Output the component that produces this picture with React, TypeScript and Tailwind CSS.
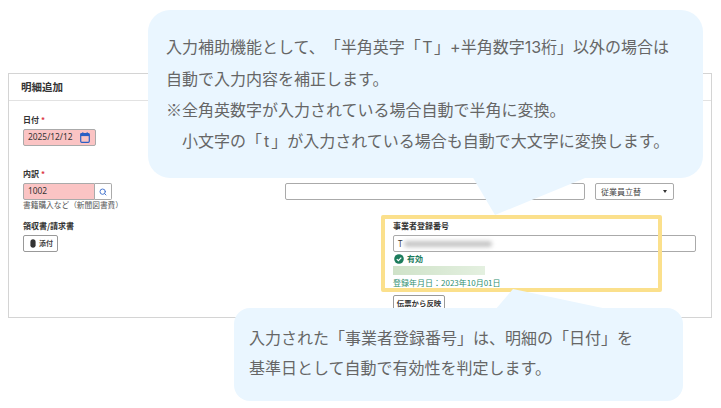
import { Search } from 'lucide-react';

const FONT = "font-['Noto_Sans_CJK_JP','Noto_Sans',sans-serif]";

function Label({ children, required }: { children: string; required?: boolean }) {
  return (
    <div className="h-[12px] text-[8px] leading-[12px] font-bold text-[#333]">
      {children}
      {required && <span className="ml-[2px] text-[#dc3545]">*</span>}
    </div>
  );
}

function CalendarIcon() {
  return (
    <svg width="10" height="11" viewBox="0 0 10 11" className="shrink-0">
      <rect x="0.7" y="1.5" width="8.6" height="8.8" rx="1" fill="none" stroke="#2b5fc4" strokeWidth="1.2" />
      <rect x="0.7" y="1.5" width="8.6" height="2.6" fill="#2b5fc4" />
      <rect x="2.2" y="0.3" width="1.2" height="1.6" fill="#2b5fc4" />
      <rect x="6.6" y="0.3" width="1.2" height="1.6" fill="#2b5fc4" />
    </svg>
  );
}

function ClipIcon() {
  return (
    <svg width="6" height="9" viewBox="0 0 6 9" className="shrink-0">
      <path d="M3 0.3C4.6 0.3 5.6 1.4 5.6 2.8V6.2C5.6 7.7 4.5 8.7 3 8.7C1.5 8.7 0.4 7.7 0.4 6.2V2.8C0.4 1.4 1.4 0.3 3 0.3Z" fill="#333" />
    </svg>
  );
}

function CheckIcon() {
  return (
    <svg width="10" height="10" viewBox="0 0 10 10" className="shrink-0">
      <circle cx="5" cy="5" r="4.8" fill="#1c7c5c" />
      <path d="M2.8 5.1L4.4 6.6L7.3 3.6" fill="none" stroke="#fff" strokeWidth="1.2" />
    </svg>
  );
}

function DetailForm() {
  return (
    <div className="h-[245px] w-[704px] border border-[#d4d4d4] bg-white">
      <div className="flex h-[27px] items-center border-b border-[#e2e2e2] pl-[12px] text-[10.5px] font-bold text-[#333]">
        明細追加
      </div>
      <div className="flex">
        <div className="w-[276px] pl-[14px] pt-[13px]">
          <Label required>日付</Label>
          <div className="mt-[3px] flex h-[17px] w-[73px] items-center justify-between rounded-[2px] border border-[#aaa] bg-[#fbc4c4] pl-[4px] pr-[5px] text-[8.4px] text-[#333]">
            <span className="font-['Noto_Sans',sans-serif]">2025/12/12</span>
            <CalendarIcon />
          </div>
          <div className="mt-[22px]">
            <Label required>内訳</Label>
          </div>
          <div className="mt-[3px] flex h-[17px] w-[89px]">
            <div className="flex w-[72px] items-center rounded-l-[2px] border border-[#aaa] bg-[#fbc4c4] pl-[4px] text-[8.4px] text-[#333]">
              <span className="font-['Noto_Sans',sans-serif]">1002</span>
            </div>
            <div className="flex w-[17px] items-center justify-center rounded-r-[2px] border border-l-0 border-[#aaa] bg-white">
              <Search size={8} strokeWidth={3} className="text-[#4a78d0]" />
            </div>
          </div>
          <div className="h-[9px] text-[7.7px] leading-[9px] text-[#555] [text-spacing-trim:space-all]">書籍購入など（新聞図書費）</div>
          <div className="mt-[11px]">
            <Label>領収書/請求書</Label>
          </div>
          <div className="mt-[3px] flex h-[17px] w-[35px] items-center gap-[3px] rounded-[2px] border border-[#999] bg-white pl-[6px] text-[7px] font-bold text-[#444]">
            <ClipIcon />
            添付
          </div>
        </div>

        <div className="flex-1 pt-[82px]">
          <div className="flex h-[17px] gap-[10px]">
            <div className="w-[300px] rounded-[2px] border border-[#aaa] bg-white" />
            <div className="flex w-[79px] items-center justify-between rounded-[2px] border border-[#aaa] bg-white pl-[5px] pr-[6px] text-[8px] text-[#444]">
              従業員立替
              <span className="h-0 w-0 border-x-[2px] border-t-[3px] border-x-transparent border-t-[#333]" />
            </div>
          </div>
          <div className="ml-[108px] mt-[20px]">
            <Label>事業者登録番号</Label>
            <div className="mt-[3px] flex h-[17px] w-[303px] items-center rounded-[2px] border border-[#aaa] bg-white pl-[4px] text-[8px] text-[#333]">
              <span className="font-['Noto_Sans',sans-serif]">T</span>
              <div className="ml-[2px] h-[6px] w-[88px] rounded-full bg-[#c4c4c4] blur-[2px]" />
            </div>
            <div className="ml-[1px] mt-[2px] flex h-[10px] items-center gap-[3px] text-[8px] font-bold text-[#1c7c5c]">
              <CheckIcon />
              有効
            </div>
            <div className="mt-[2px] h-[9px] w-[92px] bg-gradient-to-r from-[#cfe2c8] to-[#e4f0e0] blur-[0.6px]" />
            <div className="mt-[3px] h-[10px] text-[8px] leading-[10px] text-[#2f8f6f]">登録年月日：2023年10月01日</div>
            <div className="mt-[7px] flex h-[16px] w-[52px] items-center justify-center rounded-[2px] border border-[#999] bg-white text-[7.4px] font-bold text-[#333]">
              伝票から反映
            </div>
          </div>
        </div>
      </div>
    </div>
  );
}

export default function App() {
  return (
    <div className={`relative h-[408px] w-[721px] overflow-hidden bg-white pl-[8px] pt-[73px] ${FONT}`}>
      <DetailForm />

      {/* highlight around the registration number */}
      <div className="absolute left-[381px] top-[215px] h-[77px] w-[281px] rounded-[2px] border-[4px] border-[#fbe08c]" />

      {/* callout tails */}
      <svg className="absolute left-0 top-0" width="721" height="408" viewBox="0 0 721 408">
        <polygon points="472,176 495,215 590,176" fill="#eaf6ff" />
        <polygon points="495,310 513,289 612,310" fill="#eaf6ff" />
      </svg>

      <div className="absolute left-[148px] top-[10px] h-[168px] w-[555px] rounded-[22px] bg-[#eaf6ff] pl-[18px] pt-[21px] text-[16px] leading-[31px] text-[#666] [text-spacing-trim:space-all]">
        <p>
          入力補助機能として、「半角英字「<span className="mx-[1.5px] font-['Inter',sans-serif]">T</span>」
          <span className="font-['Inter',sans-serif]">+</span>半角数字<span className="font-['Inter',sans-serif]">13</span>桁」以外の場合は
        </p>
        <p>自動で入力内容を補正します。</p>
        <p>※全角英数字が入力されている場合自動で半角に変換。</p>
        <p className="pl-[16px]">
          小文字の「<span className="mx-[2px] font-['Inter',sans-serif]">t</span>」が入力されている場合も自動で大文字に変換します。
        </p>
      </div>

      <div className="absolute left-[234px] top-[308px] h-[93px] w-[449px] rounded-[16px] bg-[#eaf6ff] pl-[15px] pt-[14px] text-[16px] leading-[30px] text-[#666] [text-spacing-trim:space-all]">
        <p>入力された「事業者登録番号」は、明細の「日付」を</p>
        <p>基準日として自動で有効性を判定します。</p>
      </div>
    </div>
  );
}
